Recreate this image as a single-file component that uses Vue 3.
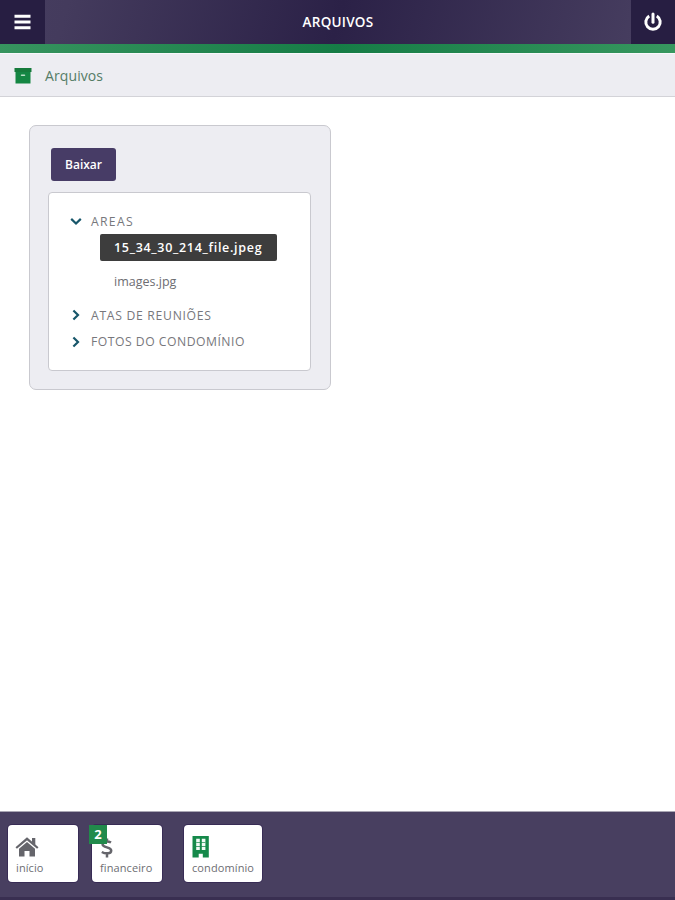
<script setup>
const folders = [
  { name: 'AREAS', cls: 'areas', open: true },
  { name: 'ATAS DE REUNIÕES', cls: 'atas', open: false },
  { name: 'FOTOS DO CONDOMÍNIO', cls: 'fotos', open: false },
]
</script>

<template>
  <div class="page">
    <header class="top">
      <button class="corner" aria-label="Menu">
        <svg width="18" height="16" viewBox="0 0 18 16"><path d="M.5 2.3h16M.5 8h16M.5 13.7h16" stroke="#fff" stroke-width="3" /></svg>
      </button>
      <h1><span>ARQUIVOS</span></h1>
      <button class="corner right" aria-label="Sair">
        <svg width="20" height="20" viewBox="0 0 20 20" fill="none" stroke="#fff" stroke-width="3"><path d="M6.2 3.9a7.2 7.2 0 1 0 7.6 0" /><path d="M10 2v8.2" stroke-linecap="round" /></svg>
      </button>
    </header>
    <div class="stripe"></div>
    <div class="crumb">
      <svg width="18" height="16" viewBox="0 0 18 16"><path d="M.5 0h17v4H.5z" fill="#167b3c" /><path d="M1.5 4h15v11.5h-15z" fill="#148643" /><path d="M7.5 7.3h3" stroke="#b9dfc7" stroke-width="1.5" stroke-linecap="round" /></svg>
      <span class="crumb-text">Arquivos</span>
    </div>

    <main>
      <section class="panel">
        <button class="download"><span>Baixar</span></button>
        <div class="tree">
          <template v-for="f in folders" :key="f.name">
            <div class="folder">
              <svg v-if="f.open" class="chev" width="12" height="12" viewBox="0 0 12 12"><path d="M1.2 3.9 6 8.5l4.8-4.6" /></svg>
              <svg v-else class="chev" width="12" height="12" viewBox="0 0 12 12"><path d="M3.4 1.5 8 6l-4.6 4.5" /></svg>
              <span :class="f.cls">{{ f.name }}</span>
            </div>
            <div v-if="f.open" class="files">
              <div class="file selected"><span>15_34_30_214_file.jpeg</span></div>
              <div class="file"><span>images.jpg</span></div>
            </div>
          </template>
        </div>
      </section>
    </main>

    <footer>
      <a class="tile home">
        <svg width="24" height="22" viewBox="0 0 24 22"><path d="M1.2 12 12 2.8 22.8 12" fill="none" stroke="#65656b" stroke-width="2.2" /><path d="M17 2h3.3v7L17 6.2z" fill="#65656b" /><path d="M4 12.7 12 6l8 6.7V20.5h-5.5V15h-5v5.5H4z" fill="#65656b" /></svg>
        <span>início</span>
      </a>
      <a class="tile finance">
        <svg width="14" height="22" viewBox="0 0 14 22" fill="none" stroke="#65656b" stroke-width="2.5"><path d="M11 6.5C8.5 5 2.6 4.7 2.6 8.2c0 4 8.6 2.3 8.6 6.2 0 3.8-6 3.5-9.4 1.6M7 2.5V6M7 17v4.5" /></svg>
        <span>financeiro</span>
        <b class="badge">2</b>
      </a>
      <a class="tile condo">
        <svg width="18" height="22" viewBox="0 0 18 22"><path d="M.5 0h16.3v21.5h-6v-3.8H6.7v3.8H.5z" fill="#15894a" /><path d="M4.2 2.8h3.6v7.4H4.2zM9.8 2.8h3.6v7.4H9.8zM4.2 11h3.6v3H4.2zM9.8 11h3.6v3H9.8z" fill="#f2faf5" /><path d="M4.2 6.5h9.2" stroke="#15894a" stroke-width=".7" /></svg>
        <span>condomínio</span>
      </a>
    </footer>
  </div>
</template>

<style>
body { background: #fff; }
</style>

<style scoped>
* { box-sizing: border-box; }
.page {
  height: 900px;
  display: flex;
  flex-direction: column;
  font-family: "Open Sans", "Noto Sans", sans-serif;
  color: #6d6d72;
  overflow: hidden;
}
button { border: 0; padding: 0; font-family: inherit; }
span { white-space: nowrap; }
svg { display: block; flex: none; }
.top {
  height: 44px;
  flex: none;
  display: flex;
  background: linear-gradient(105deg, #463d60 0%, #443b5d 10%, #2b2147 50%, #463d5f 94%);
}
.corner { width: 45px; display: flex; align-items: center; justify-content: center; background: #271e42; }
.right { width: 44px; }
h1 { flex: 1; margin: 0; display: flex; align-items: center; justify-content: center; color: #fff; font-size: 13.5px; font-weight: 600; letter-spacing: 0.25px; }
.stripe { height: 9px; flex: none; background: linear-gradient(105deg, #37945f, #167c46 50%, #37975f); }
.crumb { height: 44px; flex: none; display: flex; align-items: center; gap: 13px; padding: 1px 0 0 14px; background: #ededf2; border-top: 1px solid #f8f8fb; border-bottom: 1px solid #d3d3d8; }
.crumb-text { font-size: 14px; color: #557c66; font-weight: 400; letter-spacing: 0.1px; }
main { flex: 1; padding: 28px 29px; }
.panel { width: 302px; height: 265px; padding: 22px 18px 18px; background: #ededf2; border: 1.5px solid #c9c9cf; border-radius: 7px; }
.download { display: flex; align-items: center; justify-content: center; width: 65px; height: 33px; margin-left: 3px; border-radius: 3px; background: #473c66; color: #fff; font-size: 12px; font-weight: 600; }
.tree { width: 263px; height: 179px; margin-top: 11px; padding: 15px 20px 15px 21px; background: #fff; border: 1.5px solid #c9c9cf; border-radius: 4px; }
.folder { display: flex; align-items: center; height: 26.5px; gap: 9px; font-size: 12.2px; font-weight: 400; color: #77777c; letter-spacing: 0.5px; }
.areas { letter-spacing: 1.3px; }
.atas { letter-spacing: 0.7px; }
.chev { fill: none; stroke: #17566a; stroke-width: 2.2; }
.files { height: 68px; padding-left: 30px; margin-top: -0.5px; }
.file { display: flex; align-items: center; height: 27px; width: 177px; padding-left: 14px; font-size: 12.5px; }
.selected { margin-bottom: 7px; background: #3d3d3d; color: #fff; border-radius: 2px; font-weight: 600; letter-spacing: 0.69px; }
footer { height: 89px; flex: none; display: flex; align-items: flex-start; padding: 13px 0 0 8px; background: #483f60; border-top: 1px solid #aaa7b4; border-bottom: 3px solid #392f51; }
.tile { position: relative; height: 57px; padding: 11px 8px 0; background: #fff; border-radius: 4px; box-shadow: 0 0 0 1px #382c55; font-size: 11px; }
.tile span { display: block; margin-top: 2px; line-height: 15px; letter-spacing: 0.1px; }
.home { width: 70px; }
.home svg { margin-left: -1px; }
.finance { width: 70px; margin-left: 14px; }
.condo { width: 78px; margin-left: 22px; }
.badge { position: absolute; left: -3px; top: 0; width: 18px; height: 19px; background: #218a4b; color: #fff; font-size: 13px; line-height: 19px; text-align: center; }
</style>
